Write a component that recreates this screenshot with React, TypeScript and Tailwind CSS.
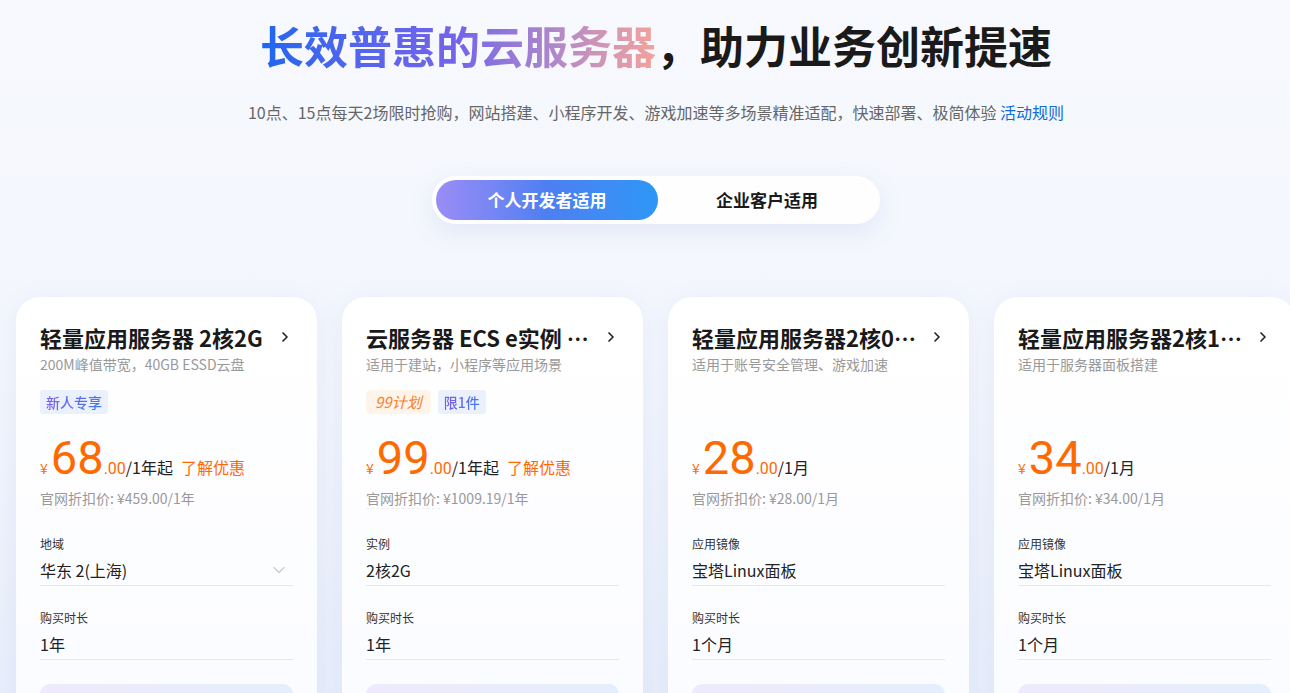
import { ChevronDown, ChevronRight } from "lucide-react";

type Tag = { text: string; kind: "blue" | "orange" };
type Field = { label: string; value: string; select?: boolean };
type Plan = {
  title: string;
  desc: string;
  tags: Tag[];
  price: string;
  unit: string;
  promo?: boolean;
  official: string;
  fields: Field[];
};

const PLANS: Plan[] = [
  {
    title: "轻量应用服务器 2核2G",
    desc: "200M峰值带宽，40GB ESSD云盘",
    tags: [{ text: "新人专享", kind: "blue" }],
    price: "68",
    unit: "/1年起",
    promo: true,
    official: "¥459.00/1年",
    fields: [
      { label: "地域", value: "华东 2(上海)", select: true },
      { label: "购买时长", value: "1年" },
    ],
  },
  {
    title: "云服务器 ECS e实例 2核2G 3M",
    desc: "适用于建站，小程序等应用场景",
    tags: [
      { text: "99计划", kind: "orange" },
      { text: "限1件", kind: "blue" },
    ],
    price: "99",
    unit: "/1年起",
    promo: true,
    official: "¥1009.19/1年",
    fields: [
      { label: "实例", value: "2核2G" },
      { label: "购买时长", value: "1年" },
    ],
  },
  {
    title: "轻量应用服务器2核0.5G",
    desc: "适用于账号安全管理、游戏加速",
    tags: [],
    price: "28",
    unit: "/1月",
    official: "¥28.00/1月",
    fields: [
      { label: "应用镜像", value: "宝塔Linux面板" },
      { label: "购买时长", value: "1个月" },
    ],
  },
  {
    title: "轻量应用服务器2核1G宝塔",
    desc: "适用于服务器面板搭建",
    tags: [],
    price: "34",
    unit: "/1月",
    official: "¥34.00/1月",
    fields: [
      { label: "应用镜像", value: "宝塔Linux面板" },
      { label: "购买时长", value: "1个月" },
    ],
  },
];

function PlanCard({ plan }: { plan: Plan }) {
  return (
    <div className="flex w-[301px] shrink-0 flex-col rounded-[24px] bg-gradient-to-b from-white to-[#fbfcff] px-6 pt-[25px] shadow-[0_4px_24px_rgba(120,140,200,0.10)]">
      <div className="flex items-center justify-between gap-3">
        <div className="truncate text-[22px] font-bold leading-[30px] text-[#1a1a1a]">{plan.title}</div>
        <ChevronRight className="h-4 w-4 shrink-0 text-[#222]" strokeWidth={2.5} />
      </div>
      <div className="mt-[2px] text-[14px] leading-[20px] text-[#999]">{plan.desc}</div>
      <div className="mt-[16px] flex h-[24px] gap-[7px]">
        {plan.tags.map((t) =>
          t.kind === "blue" ? (
            <span
              key={t.text}
              className="flex items-center rounded-[3px] bg-[#eaf1fd] px-[6px] text-[14px] font-medium"
            >
              <span className="bg-gradient-to-r from-[#7a5ce8] to-[#3a7bf0] bg-clip-text text-transparent">
                {t.text}
              </span>
            </span>
          ) : (
            <span
              key={t.text}
              className="flex items-center rounded-[5px] bg-[#fff4ea] px-[9px] text-[15px] italic text-[#f5822e]"
            >
              {t.text}
            </span>
          )
        )}
      </div>
      <div className="mt-[20px] flex items-baseline whitespace-nowrap">
        <span className="mr-[3px] text-[14px] text-[#ff6a00]">¥</span>
        <span className="font-['Roboto',sans-serif] text-[47px] leading-[48px] text-[#ff6a00]">{plan.price}</span>
        <span className="font-['Roboto',sans-serif] text-[16px] text-[#ff6a00]">.00</span>
        <span className="text-[16px] text-[#222]">{plan.unit}</span>
        {plan.promo && <span className="ml-[8px] text-[16px] text-[#ff6a00]">了解优惠</span>}
      </div>
      <div className="mt-[6px] text-[14px] leading-[20px] text-[#999]">
        <span className="border-b border-dashed border-[#eee]">官网折扣价:</span> {plan.official}
      </div>
      <div className="mt-[27px] flex flex-col gap-[23px]">
        {plan.fields.map((f) => (
          <div key={f.label}>
            <div className="text-[12px] leading-[18px] text-[#333]">{f.label}</div>
            <div className="mt-[5px] flex items-center justify-between border-b border-[#e8e8e8] pb-[3px]">
              <span className="text-[16px] leading-[24px] text-[#222]">{f.value}</span>
              {f.select && <ChevronDown className="mr-[4px] h-5 w-5 text-[#c8c8c8]" strokeWidth={1.3} />}
            </div>
          </div>
        ))}
      </div>
      <div className="mt-[24px] h-[40px] rounded-[10px] bg-gradient-to-r from-[#efeafd] to-[#e4eefc]" />
    </div>
  );
}

export default function App() {
  return (
    <div className="h-[693px] w-[1290px] overflow-hidden bg-gradient-to-b from-[#f7f9fd] via-[#f3f6fd] to-[#e8eefb] font-['Noto_Sans_CJK_SC','Noto_Sans',sans-serif]">
      <div className="pl-[22px]">
        <h1 className="pt-[17px] text-center text-[44px] font-bold leading-[56px] text-[#1a1a1a]">
          <span className="bg-gradient-to-r from-[#1766f0] via-[#7563ea] to-[#f4a29a] bg-clip-text text-transparent">
            长效普惠的云服务器
          </span>
          ，助力业务创新提速
        </h1>
        <p className="mt-[28px] text-center text-[16px] leading-[22px] text-[#666]">
          10点、15点每天2场限时抢购，网站搭建、小程序开发、游戏加速等多场景精准适配，快速部署、极简体验{" "}
          <span className="text-[#0f6bd8]">活动规则</span>
        </p>
        <div className="mt-[53px] flex justify-center">
          <div className="flex h-[48px] w-[448px] items-center rounded-full bg-white/90 p-[4px] shadow-[0_8px_24px_rgba(130,150,220,0.16)]">
            <div className="flex h-[40px] w-[222px] items-center justify-center rounded-full bg-gradient-to-r from-[#9a8cf6] via-[#4c7ff2] to-[#2b97f6] text-[17px] font-bold text-white">
              个人开发者适用
            </div>
            <div className="flex flex-1 items-center justify-center text-[17px] font-bold text-[#1a1a1a]">企业客户适用</div>
          </div>
        </div>
      </div>
      <div className="mt-[73px] flex gap-[25px] pl-[16px]">
        {PLANS.map((p) => (
          <PlanCard key={p.price} plan={p} />
        ))}
      </div>
    </div>
  );
}
